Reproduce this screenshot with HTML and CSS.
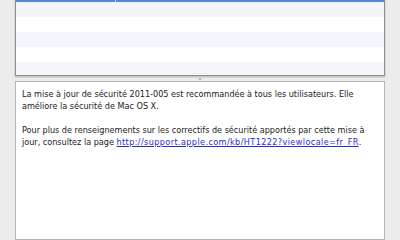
FILE: index.html
```html
<!DOCTYPE html>
<html lang="fr">
<head>
    <meta charset="UTF-8">
    <title>Mise à jour de logiciels</title>
    <link rel="stylesheet" href="styles.css">
</head>
<body>
    <div class="window">
        <!-- Update list (scrolled, only bottom part visible) -->
        <div class="update-list">
            <div class="row selected"><span class="col-notch"></span></div>
            <div class="row odd"></div>
            <div class="row"></div>
            <div class="row odd"></div>
            <div class="row"></div>
            <div class="row odd"></div>
        </div>

        <div class="splitter"><span class="grip"></span></div>

        <!-- Description of the selected update -->
        <div class="details">
            <p>La mise à jour de sécurité 2011-005 est recommandée à tous les utilisateurs. Elle améliore la sécurité de Mac OS X.</p>
            <p>Pour plus de renseignements sur les correctifs de sécurité apportés par cette mise à jour, consultez la page <a href="#">http://support.apple.com/kb/HT1222?viewlocale=fr_FR</a>.</p>
        </div>
    </div>
</body>
</html>
```

FILE: styles.css
```css
body {
    margin: 0;
    background-color: #ececec;
    font-family: "DejaVu Sans Condensed", "DejaVu Sans", sans-serif;
    overflow: hidden;
}
.window {
    display: flex;
    flex-direction: column;
    height: 240px;
    padding: 0 15px;
}
.update-list {
    height: 75px;
    flex-shrink: 0;
    overflow: hidden;
    background-color: #fff;
    border: 1px solid #8f8f8f;
    border-top: none;
    box-shadow: 0 1px 2px rgba(0, 0, 0, 0.25);
}
.row {
    height: 15px;
    background-color: #fff;
}
.row.odd {
    background-color: #f3f5fa;
}
.row.selected {
    height: 2px;
    background-color: #5a86d6;
    position: relative;
}
.col-notch {
    position: absolute;
    left: 99px;
    top: 0;
    width: 1px;
    height: 2px;
    background-color: #b9cdf0;
}
.splitter {
    height: 5px;
    flex-shrink: 0;
    display: flex;
    justify-content: center;
    align-items: center;
}
.grip {
    width: 2px;
    height: 2px;
    border-radius: 1px;
    background-color: #9a9a9a;
}
.details {
    flex: 1;
    background-color: #fff;
    border: 1px solid #b4b4b4;
    padding: 6px 12px 6px 6px;
    font-size: 9px;
    line-height: 12px;
    color: #1a1a1a;
}
.details p {
    margin: 0 0 12px 0;
}
.details a {
    color: #2a2ad0;
    letter-spacing: 0.4px;
}
```
